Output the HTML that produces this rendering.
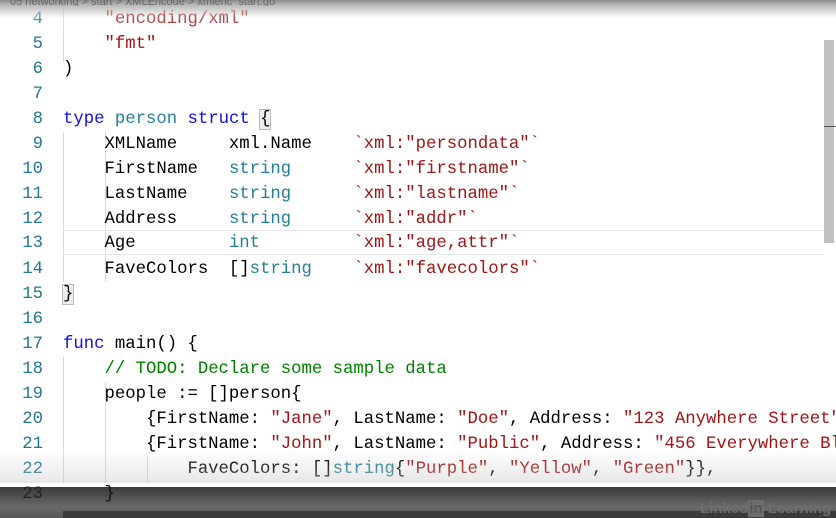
<!DOCTYPE html>
<html><head><style>
body{margin:0;width:836px;height:518px;overflow:hidden;background:#fff;position:relative;font-family:"Liberation Mono",monospace;font-size:17.3px;}
.l{position:absolute;left:0;height:25px;line-height:25px;white-space:pre;width:836px}
.n{position:absolute;left:0;width:43px;text-align:right;color:#237893}
.c{position:absolute;left:63px;color:#000}
.k{color:#1010e0}.t{color:#267f99}.s{color:#a31515}.g{color:#008000}
.guide{position:absolute;width:1px;background:#d8d8d8}
</style></head><body>
<div class="guide" style="left:63px;top:0;height:62px"></div>
<div class="guide" style="left:63px;top:132px;height:150px"></div>
<div class="guide" style="left:105px;top:132px;height:150px"></div>
<div class="guide" style="left:63px;top:357px;height:135px"></div>
<div class="guide" style="left:105px;top:382px;height:110px"></div>
<div class="guide" style="left:147px;top:457px;height:30px"></div>
<div style="position:absolute;left:63px;top:230px;width:760px;height:23px;border-top:1px solid #e6e6e6;border-bottom:1px solid #e6e6e6"></div>
<div class="l" style="top:7px"><span class="n">4</span><span class="c">    <span class="s">"encoding/xml"</span></span></div>
<div class="l" style="top:32px"><span class="n">5</span><span class="c">    <span class="s">"fmt"</span></span></div>
<div class="l" style="top:57px"><span class="n">6</span><span class="c">)</span></div>
<div class="l" style="top:82px"><span class="n">7</span></div>
<div class="l" style="top:107px"><span class="n">8</span><span class="c"><span class="k">type</span> <span class="t">person</span> <span class="k">struct</span> <span style="background:#eee;outline:1px solid #bbb">{</span></span></div>
<div class="l" style="top:132px"><span class="n">9</span><span class="c">    XMLName     xml.Name    <span class="s">`xml:"persondata"`</span></span></div>
<div class="l" style="top:157px"><span class="n">10</span><span class="c">    FirstName   <span class="t">string</span>      <span class="s">`xml:"firstname"`</span></span></div>
<div class="l" style="top:182px"><span class="n">11</span><span class="c">    LastName    <span class="t">string</span>      <span class="s">`xml:"lastname"`</span></span></div>
<div class="l" style="top:207px"><span class="n">12</span><span class="c">    Address     <span class="t">string</span>      <span class="s">`xml:"addr"`</span></span></div>
<div class="l" style="top:231px"><span class="n">13</span><span class="c">    Age         <span class="t">int</span>         <span class="s">`xml:"age,attr"`</span></span></div>
<div class="l" style="top:257px"><span class="n">14</span><span class="c">    FaveColors  []<span class="t">string</span>    <span class="s">`xml:"favecolors"`</span></span></div>
<div class="l" style="top:282px"><span class="n">15</span><span class="c"><span style="background:#eee;outline:1px solid #bbb">}</span></span></div>
<div class="l" style="top:307px"><span class="n">16</span></div>
<div class="l" style="top:332px"><span class="n">17</span><span class="c"><span class="k">func</span> main() {</span></div>
<div class="l" style="top:357px"><span class="n">18</span><span class="c">    <span class="g">// TODO: Declare some sample data</span></span></div>
<div class="l" style="top:382px"><span class="n">19</span><span class="c">    people := []person{</span></div>
<div class="l" style="top:407px"><span class="n">20</span><span class="c">        {FirstName: <span class="s">"Jane"</span>, LastName: <span class="s">"Doe"</span>, Address: <span class="s">"123 Anywhere Street"</span></span></div>
<div class="l" style="top:432px"><span class="n">21</span><span class="c">        {FirstName: <span class="s">"John"</span>, LastName: <span class="s">"Public"</span>, Address: <span class="s">"456 Everywhere Bl</span></span></div>
<div class="l" style="top:457px"><span class="n">22</span><span class="c">            FaveColors: []<span class="t">string</span>{<span class="s">"Purple"</span>, <span class="s">"Yellow"</span>, <span class="s">"Green"</span>}},</span></div>
<div style="position:absolute;left:0;top:0;width:836px;height:34px;background:linear-gradient(#8a8a8a 0,#b8b8b8 5px,rgba(255,255,255,0.25) 18px,rgba(255,255,255,0) 34px)"></div>
<div style="position:absolute;left:0;top:0;width:836px;height:6px;font:11px 'Liberation Sans',sans-serif;color:#666;line-height:4px;padding-left:10px;overflow:hidden">05 networking &gt; start &gt; XMLEncode &gt; xmlenc_start.go</div>
<div style="position:absolute;left:0;top:450px;width:836px;height:34px;background:linear-gradient(rgba(255,255,255,0),rgba(200,200,200,0.45))"></div>
<div style="position:absolute;left:824px;top:40px;width:10px;height:203px;background:#c2c2c2"></div>
<div style="position:absolute;left:824px;top:126px;width:12px;height:1px;background:#555"></div>
<div style="position:absolute;left:0;top:483px;width:836px;height:4px;background:#fff"></div>
<div style="position:absolute;left:0;top:487px;width:836px;height:31px;background:linear-gradient(#3a3a3a,#6a6a6a 20px,#555)"></div>
<div style="position:absolute;left:63px;top:511px;width:780px;height:7px;background:#3b3b3b"></div>
<div class="l" style="top:482px;color:#222"><span class="n" style="color:#222">23</span><span class="c" style="color:#111">    }</span></div>
<div style="position:absolute;left:700px;top:500px;font:bold 15px 'Liberation Sans',sans-serif;color:#6e6e6e">Linked<span style="background:#6e6e6e;color:#555;padding:0 1px">in</span> Learning</div>
</body></html>
